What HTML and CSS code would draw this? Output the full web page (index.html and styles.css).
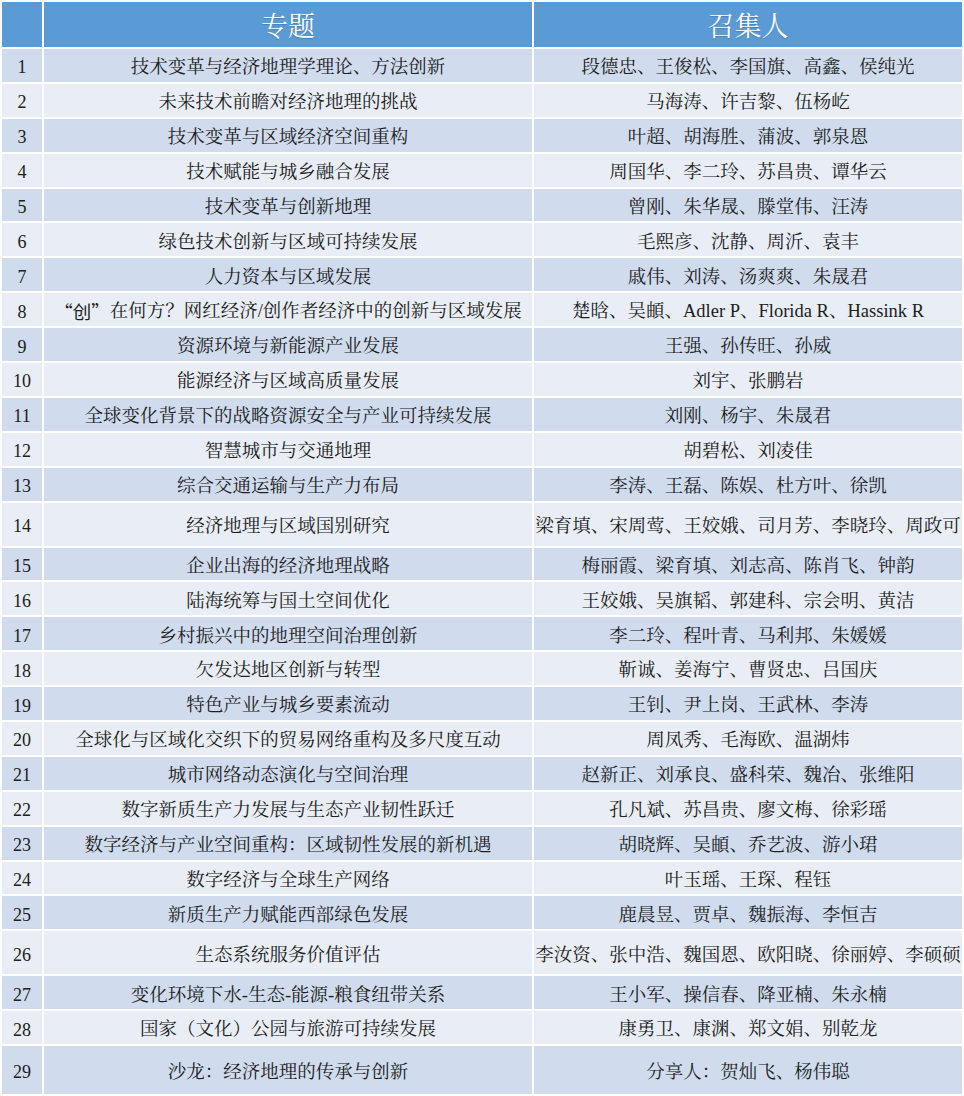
FILE: index.html
```html
<!DOCTYPE html>
<html lang="zh-CN">
<head>
<meta charset="utf-8">
<title>专题与召集人</title>
<link rel="stylesheet" href="styles.css">
</head>
<body>
<div class="table">
  <div class="row head"><div class="c num"></div><div class="c topic">专题</div><div class="c names">召集人</div></div>
  <div class="row odd"><div class="c num">1</div><div class="c topic">技术变革与经济地理学理论、方法创新</div><div class="c names">段德忠、王俊松、李国旗、高鑫、侯纯光</div></div>
  <div class="row even"><div class="c num">2</div><div class="c topic">未来技术前瞻对经济地理的挑战</div><div class="c names">马海涛、许吉黎、伍杨屹</div></div>
  <div class="row odd"><div class="c num">3</div><div class="c topic">技术变革与区域经济空间重构</div><div class="c names">叶超、胡海胜、蒲波、郭泉恩</div></div>
  <div class="row even"><div class="c num">4</div><div class="c topic">技术赋能与城乡融合发展</div><div class="c names">周国华、李二玲、苏昌贵、谭华云</div></div>
  <div class="row odd"><div class="c num">5</div><div class="c topic">技术变革与创新地理</div><div class="c names">曾刚、朱华晟、滕堂伟、汪涛</div></div>
  <div class="row even"><div class="c num">6</div><div class="c topic">绿色技术创新与区域可持续发展</div><div class="c names">毛熙彦、沈静、周沂、袁丰</div></div>
  <div class="row odd"><div class="c num">7</div><div class="c topic">人力资本与区域发展</div><div class="c names">戚伟、刘涛、汤爽爽、朱晟君</div></div>
  <div class="row even"><div class="c num">8</div><div class="c topic"><span class="cjk">“创”</span>在何方？网红经济/创作者经济中的创新与区域发展</div><div class="c names">楚晗、吴頔、Adler P、Florida R、Hassink R</div></div>
  <div class="row odd"><div class="c num">9</div><div class="c topic">资源环境与新能源产业发展</div><div class="c names">王强、孙传旺、孙威</div></div>
  <div class="row even"><div class="c num">10</div><div class="c topic">能源经济与区域高质量发展</div><div class="c names">刘宇、张鹏岩</div></div>
  <div class="row odd"><div class="c num">11</div><div class="c topic">全球变化背景下的战略资源安全与产业可持续发展</div><div class="c names">刘刚、杨宇、朱晟君</div></div>
  <div class="row even"><div class="c num">12</div><div class="c topic">智慧城市与交通地理</div><div class="c names">胡碧松、刘凌佳</div></div>
  <div class="row odd"><div class="c num">13</div><div class="c topic">综合交通运输与生产力布局</div><div class="c names">李涛、王磊、陈娱、杜方叶、徐凯</div></div>
  <div class="row even tall"><div class="c num">14</div><div class="c topic">经济地理与区域国别研究</div><div class="c names">梁育填、宋周莺、王姣娥、司月芳、李晓玲、周政可</div></div>
  <div class="row odd"><div class="c num">15</div><div class="c topic">企业出海的经济地理战略</div><div class="c names">梅丽霞、梁育填、刘志高、陈肖飞、钟韵</div></div>
  <div class="row even"><div class="c num">16</div><div class="c topic">陆海统筹与国土空间优化</div><div class="c names">王姣娥、吴旗韬、郭建科、宗会明、黄洁</div></div>
  <div class="row odd"><div class="c num">17</div><div class="c topic">乡村振兴中的地理空间治理创新</div><div class="c names">李二玲、程叶青、马利邦、朱媛媛</div></div>
  <div class="row even"><div class="c num">18</div><div class="c topic">欠发达地区创新与转型</div><div class="c names">靳诚、姜海宁、曹贤忠、吕国庆</div></div>
  <div class="row odd"><div class="c num">19</div><div class="c topic">特色产业与城乡要素流动</div><div class="c names">王钊、尹上岗、王武林、李涛</div></div>
  <div class="row even"><div class="c num">20</div><div class="c topic">全球化与区域化交织下的贸易网络重构及多尺度互动</div><div class="c names">周凤秀、毛海欧、温湖炜</div></div>
  <div class="row odd"><div class="c num">21</div><div class="c topic">城市网络动态演化与空间治理</div><div class="c names">赵新正、刘承良、盛科荣、魏冶、张维阳</div></div>
  <div class="row even"><div class="c num">22</div><div class="c topic">数字新质生产力发展与生态产业韧性跃迁</div><div class="c names">孔凡斌、苏昌贵、廖文梅、徐彩瑶</div></div>
  <div class="row odd"><div class="c num">23</div><div class="c topic">数字经济与产业空间重构：区域韧性发展的新机遇</div><div class="c names">胡晓辉、吴頔、乔艺波、游小珺</div></div>
  <div class="row even"><div class="c num">24</div><div class="c topic">数字经济与全球生产网络</div><div class="c names">叶玉瑶、王琛、程钰</div></div>
  <div class="row odd"><div class="c num">25</div><div class="c topic">新质生产力赋能西部绿色发展</div><div class="c names">鹿晨昱、贾卓、魏振海、李恒吉</div></div>
  <div class="row even tall"><div class="c num">26</div><div class="c topic">生态系统服务价值评估</div><div class="c names">李汝资、张中浩、魏国恩、欧阳晓、徐丽婷、李硕硕</div></div>
  <div class="row odd"><div class="c num">27</div><div class="c topic">变化环境下水-生态-能源-粮食纽带关系</div><div class="c names">王小军、操信春、降亚楠、朱永楠</div></div>
  <div class="row even"><div class="c num">28</div><div class="c topic">国家（文化）公园与旅游可持续发展</div><div class="c names">康勇卫、康渊、郑文娟、别乾龙</div></div>
  <div class="row odd last"><div class="c num">29</div><div class="c topic">沙龙：经济地理的传承与创新</div><div class="c names">分享人：贺灿飞、杨伟聪</div></div>
</div>
</body>
</html>
```
FILE: styles.css
```css
html, body {
  margin: 0;
  padding: 0;
  background: #ffffff;
}
body {
  font-family: "Liberation Serif", "Noto Serif CJK SC", "Noto Sans CJK SC", serif;
  color: #202020;
}
.table {
  width: 960px;
  padding: 2px 2px 0 2px;
  display: flex;
  flex-direction: column;
  gap: 2px;
}
.row {
  display: grid;
  grid-template-columns: 40px 488px 1fr;
  column-gap: 2px;
  height: 32.9px;
}
.row.tall { height: 43px; }
.row.last { height: 48px; }
.row.head { height: 45px; }
.c {
  box-sizing: border-box;
  padding-top: 4px;
  display: flex;
  align-items: center;
  justify-content: center;
  white-space: nowrap;
  overflow: hidden;
  font-size: 18.5px;
  line-height: 1;
}
.num { font-size: 18px; }
.cjk { font-family: "Noto Sans CJK SC", sans-serif; }
.head .c {
  padding-top: 5px;
  background: #5b9bd5;
  color: #ffffff;
  font-size: 27px;
  text-shadow: 0 1px 1px rgba(40, 70, 110, 0.35);
}
.odd .c { background: #d0dcee; }
.even .c { background: #e9eef6; }
```
